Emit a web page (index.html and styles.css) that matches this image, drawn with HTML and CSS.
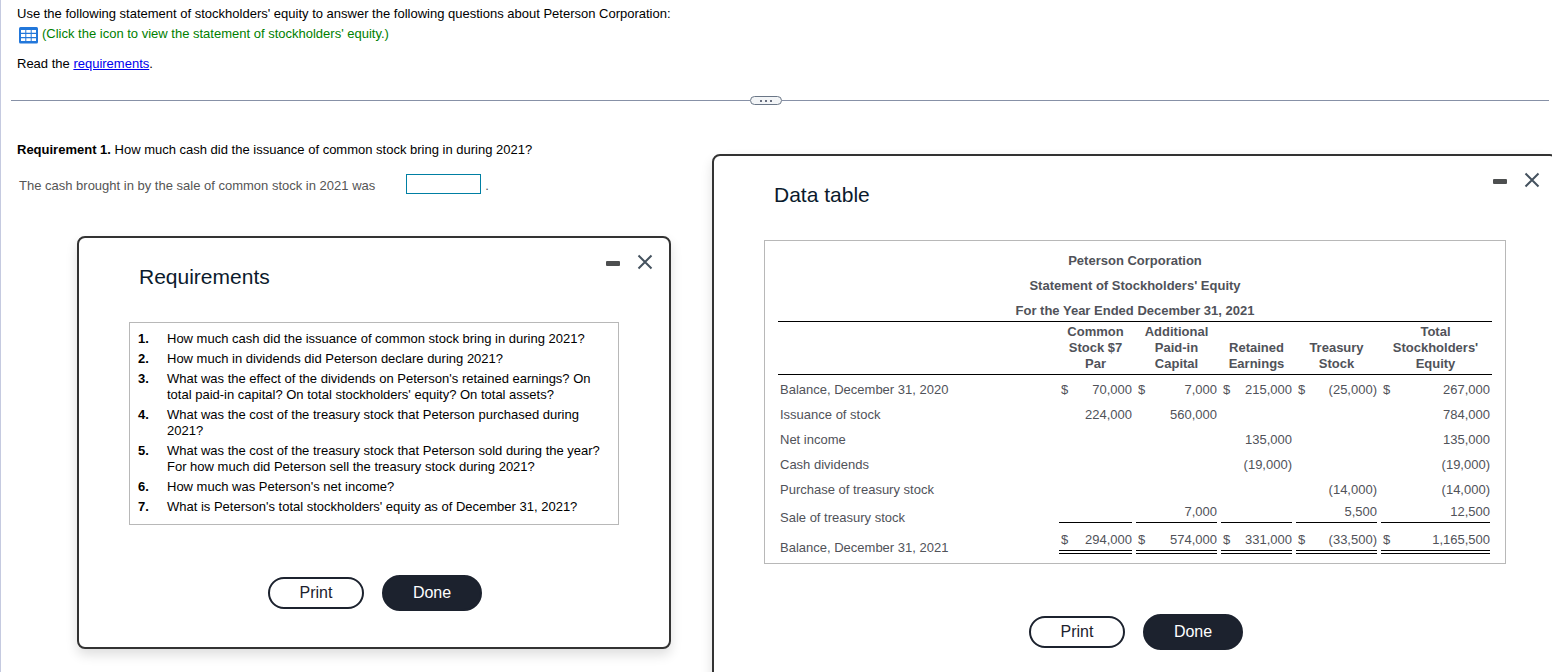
FILE: index.html
```html
<!DOCTYPE html>
<html lang="en">
<head>
<meta charset="utf-8">
<title>Statement of Stockholders' Equity</title>
<link rel="stylesheet" href="styles.css">
</head>
<body>
<main class="page">
  <section class="problem">
    <p>Use the following statement of stockholders' equity to answer the following questions about Peterson Corporation:</p>
    <p class="data-link">
      <svg class="table-icon" viewBox="0 0 19 17" aria-hidden="true">
        <rect width="19" height="16.5" rx="1.5" fill="#2277da"/>
        <path fill="#fff" d="M2 3h4.3v2.8H2zM7.3 3h4.4v2.8H7.3zM12.7 3H17v2.8h-4.3zM2 7h4.3v3H2zM7.3 7h4.4v3H7.3zM12.7 7H17v3h-4.3zM2 11.2h4.3V14H2zM7.3 11.2h4.4V14H7.3zM12.7 11.2H17V14h-4.3z"/>
      </svg>
      <span>(Click the icon to view the statement of stockholders' equity.)</span>
    </p>
    <p class="read">Read the <a href="#requirements">requirements</a>.</p>
  </section>

  <div class="divider">
    <button class="divider-handle" type="button" aria-label="Resize panes"><i></i><i></i><i></i></button>
  </div>

  <section class="work">
    <p><b>Requirement 1.</b> How much cash did the issuance of common stock bring in during 2021?</p>
    <div class="answer">
      <label for="cash">The cash brought in by the sale of common stock in 2021 was</label>
      <span class="answer-field"><input id="cash" type="text"><span>.</span></span>
    </div>
  </section>
</main>

<section class="dialog dialog-requirements" id="requirements" role="dialog" aria-labelledby="req-title">
  <header class="dialog-header">
    <h2 id="req-title">Requirements</h2>
    <div class="window-controls">
      <button type="button" aria-label="Minimize"><svg viewBox="0 0 16 16"><rect x="1" y="7" width="14" height="5" rx="1" fill="#4d4f50"/></svg></button>
      <button type="button" aria-label="Close"><svg viewBox="0 0 16 16"><path d="M1.5 1.5l13 13M14.5 1.5l-13 13" stroke="#45525f" stroke-width="2"/></svg></button>
    </div>
  </header>
  <ol class="panel req-list">
    <li>How much cash did the issuance of common stock bring in during 2021?</li>
    <li>How much in dividends did Peterson declare during 2021?</li>
    <li>What was the effect of the dividends on Peterson's retained earnings? On total paid-in capital? On total stockholders' equity? On total assets?</li>
    <li>What was the cost of the treasury stock that Peterson purchased during 2021?</li>
    <li>What was the cost of the treasury stock that Peterson sold during the year? For how much did Peterson sell the treasury stock during 2021?</li>
    <li>How much was Peterson's net income?</li>
    <li>What is Peterson's total stockholders' equity as of December 31, 2021?</li>
  </ol>
  <footer class="dialog-footer">
    <button class="btn" type="button">Print</button>
    <button class="btn btn-primary" type="button">Done</button>
  </footer>
</section>

<section class="dialog dialog-data" role="dialog" aria-labelledby="data-title">
  <header class="dialog-header">
    <h2 id="data-title">Data table</h2>
    <div class="window-controls">
      <button type="button" aria-label="Minimize"><svg viewBox="0 0 16 16"><rect x="1" y="7" width="14" height="5" rx="1" fill="#4d4f50"/></svg></button>
      <button type="button" aria-label="Close"><svg viewBox="0 0 16 16"><path d="M1.5 1.5l13 13M14.5 1.5l-13 13" stroke="#45525f" stroke-width="2"/></svg></button>
    </div>
  </header>
  <div class="panel data-panel">
    <table class="equity">
      <colgroup><col><col class="c-common"><col class="c-paid"><col class="c-retained"><col class="c-treasury"><col class="c-total"></colgroup>
      <thead>
        <tr class="title"><th colspan="6">Peterson Corporation</th></tr>
        <tr class="title"><th colspan="6">Statement of Stockholders' Equity</th></tr>
        <tr class="title period"><th colspan="6">For the Year Ended December 31, 2021</th></tr>
        <tr class="heads">
          <td></td>
          <th>Common<br>Stock $7<br>Par</th>
          <th>Additional<br>Paid-in<br>Capital</th>
          <th>Retained<br>Earnings</th>
          <th>Treasury<br>Stock</th>
          <th>Total<br>Stockholders'<br>Equity</th>
        </tr>
      </thead>
      <tbody>
        <tr class="opening">
          <th>Balance, December 31, 2020</th>
          <td><div><span>$</span><span>70,000</span></div></td>
          <td><div><span>$</span><span>7,000</span></div></td>
          <td><div><span>$</span><span>215,000</span></div></td>
          <td><div><span>$</span><span>(25,000)</span></div></td>
          <td><div><span>$</span><span>267,000</span></div></td>
        </tr>
        <tr><th>Issuance of stock</th><td>224,000</td><td>560,000</td><td></td><td></td><td>784,000</td></tr>
        <tr><th>Net income</th><td></td><td></td><td>135,000</td><td></td><td>135,000</td></tr>
        <tr><th>Cash dividends</th><td></td><td></td><td>(19,000)</td><td></td><td>(19,000)</td></tr>
        <tr><th>Purchase of treasury stock</th><td></td><td></td><td></td><td>(14,000)</td><td>(14,000)</td></tr>
        <tr class="subtotal">
          <th>Sale of treasury stock</th>
          <td><div><span></span></div></td>
          <td><div><span></span><span>7,000</span></div></td>
          <td><div><span></span></div></td>
          <td><div><span></span><span>5,500</span></div></td>
          <td><div><span></span><span>12,500</span></div></td>
        </tr>
        <tr class="closing">
          <th>Balance, December 31, 2021</th>
          <td><div><span>$</span><span>294,000</span></div></td>
          <td><div><span>$</span><span>574,000</span></div></td>
          <td><div><span>$</span><span>331,000</span></div></td>
          <td><div><span>$</span><span>(33,500)</span></div></td>
          <td><div><span>$</span><span>1,165,500</span></div></td>
        </tr>
      </tbody>
    </table>
  </div>
  <footer class="dialog-footer">
    <button class="btn" type="button">Print</button>
    <button class="btn btn-primary" type="button">Done</button>
  </footer>
</section>
</body>
</html>
```
FILE: styles.css
```css
* { box-sizing: border-box; }

body {
  margin: 0;
  min-height: 100vh;
  overflow: hidden;
  border-left: 1px solid #c5cae0;
  background: #fff;
  color: #000;
  font: 13px/16px "Liberation Sans", Arial, sans-serif;
}

p, h2 { margin: 0; }

button { font-family: inherit; cursor: pointer; }

.problem { padding: 6px 16px 0; }

.data-link {
  display: flex;
  gap: 4px;
  padding-left: 2px;
  margin-top: 4px;
  color: #008000;
}

.table-icon { width: 19px; height: 17px; margin-top: 1px; }

.read { margin-top: 12px; }

.read a { color: #00e; }

.divider {
  display: flex;
  align-items: center;
  margin: 24px 3px 0 10px;
}

.divider::before, .divider::after {
  content: "";
  flex: 1;
  height: 1px;
  background: #8791a7;
}

.divider::before { flex: 0 1 739px; }

.divider-handle {
  display: flex;
  align-items: center;
  justify-content: center;
  gap: 3px;
  width: 32px;
  height: 9px;
  padding: 0;
  border: 1px solid #6a7686;
  border-radius: 5px;
  background: #f3f5f7;
}

.divider-handle i { width: 2px; height: 2px; background: #6a7080; }

.work { padding: 37px 16px; }

.answer {
  display: flex;
  align-items: flex-end;
  gap: 31px;
  margin-top: 16px;
  padding-left: 2px;
  color: #555;
}

.answer-field { display: flex; align-items: flex-end; gap: 4px; }

.answer input {
  width: 75px;
  height: 20px;
  padding: 0 4px;
  border: 1px solid #007fa3;
  background: #fff;
  font: inherit;
}

.dialog {
  position: absolute;
  border: 2px solid #333;
  border-radius: 8px;
  background: #fff;
  box-shadow: 0 6px 12px rgba(0, 0, 0, .13);
}

.dialog-requirements { left: 77px; top: 236px; width: 594px; }

.dialog-data { left: 712px; top: 154px; width: 846px; }

.dialog-header {
  display: flex;
  justify-content: space-between;
  height: 84px;
  padding: 16px 16px 0 60px;
}

.dialog-header h2 {
  padding-top: 11px;
  color: #0b1a2c;
  font-size: 21px;
  font-weight: normal;
  line-height: 24px;
}

.window-controls { display: flex; gap: 16px; }

.window-controls button {
  width: 16px;
  height: 16px;
  padding: 0;
  border: 0;
  background: none;
}

.window-controls svg { display: block; width: 16px; height: 16px; }

.panel { margin: 0 50px; border: 1px solid #b8b8b8; }

.req-list {
  padding: 6px 16px 7px 8px;
  list-style: none;
  counter-reset: req;
}

.req-list li {
  display: grid;
  grid-template-columns: 29px 1fr;
  padding: 2px 0;
  counter-increment: req;
}

.req-list li::before { content: counter(req) "."; font-weight: bold; }

.dialog-footer {
  display: flex;
  align-items: center;
  justify-content: center;
  gap: 18px;
  padding: 50px 0 36px 2px;
}

.btn {
  width: 96px;
  height: 32px;
  padding: 0;
  border: 2px solid #1c222e;
  border-radius: 18px;
  background: #fff;
  color: #1c222e;
  font-size: 16px;
}

.btn-primary { width: 100px; height: 36px; background: #1c222e; color: #fff; }

.data-panel { padding: 7px 13px 8px; }

.equity {
  width: 100%;
  table-layout: fixed;
  border-collapse: separate;
  border-spacing: 0;
  color: #505259;
}

.c-common { width: 77px; }
.c-paid, .c-treasury { width: 85px; }
.c-retained { width: 75px; }
.c-total { width: 113px; }

.equity th, .equity td { padding: 5px 2px 4px; vertical-align: top; }

.equity .period th { padding-bottom: 2px; border-bottom: 1px solid #000; }

.equity .heads > * {
  padding: 2px 2px 2px;
  border-bottom: 1px solid #000;
  vertical-align: bottom;
}

.equity tbody th { text-align: left; font-weight: normal; }

.equity tbody td { text-align: right; }

.equity .opening > * { padding-top: 7px; }

.equity td div {
  display: flex;
  justify-content: space-between;
  min-height: 16px;
  padding-left: 2px;
}

.equity .subtotal th { padding: 8px 2px 4px; }

.equity .subtotal td { padding: 2px 2px 0; }

.equity .subtotal div { min-height: 19px; border-bottom: 1px solid #000; }

.equity .closing th { padding: 10px 2px 0; }

.equity .closing td { padding: 2px 2px 0; }

.equity .closing div {
  padding-bottom: 2px;
  border-bottom: 1px solid #000;
  box-shadow: 0 2px #fff, 0 3px #000;
}

.equity .closing th { height: 25px; }

.data-panel { padding-bottom: 7px; }
```
